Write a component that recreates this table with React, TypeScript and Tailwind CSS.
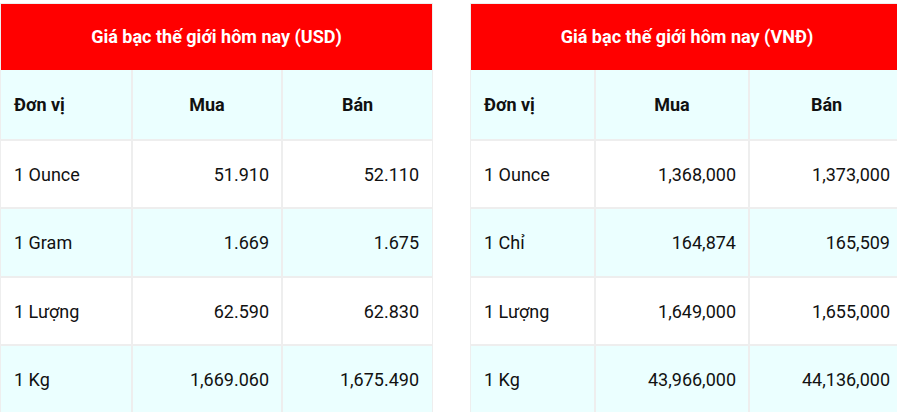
import React from "react";

type Row = { unit: string; buy: string; sell: string };

const usd: Row[] = [
  { unit: "1 Ounce", buy: "51.910", sell: "52.110" },
  { unit: "1 Gram", buy: "1.669", sell: "1.675" },
  { unit: "1 Lượng", buy: "62.590", sell: "62.830" },
  { unit: "1 Kg", buy: "1,669.060", sell: "1,675.490" },
];

const vnd: Row[] = [
  { unit: "1 Ounce", buy: "1,368,000", sell: "1,373,000" },
  { unit: "1 Chỉ", buy: "164,874", sell: "165,509" },
  { unit: "1 Lượng", buy: "1,649,000", sell: "1,655,000" },
  { unit: "1 Kg", buy: "43,966,000", sell: "44,136,000" },
];

const heights = ["h-[68px]", "h-[69px]", "h-[69px]", "h-[68px]"];

function PriceTable({ title, rows, cols }: { title: string; rows: Row[]; cols: string }) {
  return (
    <div className="flex flex-col shrink-0 border-l border-r border-t border-[#eeeeee]">
      <div className="h-[66px] bg-[#ff0000] flex items-center justify-center text-white font-bold text-[18px]">
        {title}
      </div>
      <div className={`grid ${cols} gap-x-[2px] bg-[#eeeeee] h-[70px]`}>
        <div className="bg-[#ebffff] flex items-center pl-[13px] font-bold">Đơn vị</div>
        <div className="bg-[#ebffff] flex items-center justify-center font-bold">Mua</div>
        <div className="bg-[#ebffff] flex items-center justify-center font-bold">Bán</div>
      </div>
      {rows.map((r, i) => {
        const bg = i % 2 === 1 ? "bg-[#ebffff]" : "bg-white";
        return (
          <div key={i} className={`grid ${cols} gap-x-[2px] bg-[#eeeeee] border-t-2 border-[#eeeeee] ${heights[i]}`}>
            <div className={`${bg} flex items-center pl-[13px]`}>{r.unit}</div>
            <div className={`${bg} flex items-center justify-end pr-[12px]`}>{r.buy}</div>
            <div className={`${bg} flex items-center justify-end pr-[13px]`}>{r.sell}</div>
          </div>
        );
      })}
    </div>
  );
}

export default function App() {
  return (
    <div
      className="w-[897px] h-[412px] overflow-hidden bg-white flex gap-[37px] pt-[3px] text-[18px] text-[#111111]"
      style={{ fontFamily: "Roboto, 'Noto Sans', sans-serif" }}
    >
      <PriceTable title="Giá bạc thế giới hôm nay (USD)" rows={usd} cols="grid-cols-[130px_148px_149px]" />
      <PriceTable title="Giá bạc thế giới hôm nay (VNĐ)" rows={vnd} cols="grid-cols-[123px_152px_153px]" />
    </div>
  );
}
